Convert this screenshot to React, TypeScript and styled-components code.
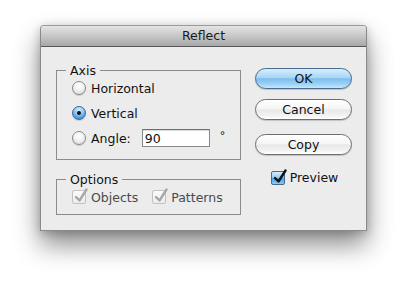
import React from "react";
import styled, { createGlobalStyle, css } from "styled-components";

const Global = createGlobalStyle`
  html, body { margin: 0; padding: 0; background: #ffffff; }
  body { font-family: "DejaVu Sans", "Lucida Grande", sans-serif; font-size: 12.5px; color: #111; }
  * { box-sizing: border-box; }
`;

const Page = styled.div`
  width: 406px;
  height: 285px;
  padding: 25px 0 0 40px;
`;

const Window = styled.div`
  width: 327px;
  height: 206px;
  background: #ececec;
  border: 1px solid #8a8a8a;
  border-top-color: #9a9a9a;
  border-radius: 4px 4px 0 0;
  box-shadow: 0 14px 26px rgba(0, 0, 0, 0.45), 0 2px 10px rgba(0, 0, 0, 0.2);
  display: flex;
  flex-direction: column;
`;

const TitleBar = styled.div`
  height: 21px;
  flex: none;
  background: linear-gradient(#e4e4e4, #c4c4c4 55%, #a7a7a7);
  border-bottom: 1px solid #555;
  border-radius: 3px 3px 0 0;
  text-align: center;
  line-height: 20px;
  font-size: 12.5px;
  color: #1a1a1a;
`;

const Body = styled.div`
  display: flex;
  align-items: flex-start;
  padding: 16px 14px 0 15px;
`;

const LeftCol = styled.div`
  width: 185px;
  display: flex;
  flex-direction: column;
  gap: 12px;
`;

const Group = styled.fieldset`
  margin: 0;
  padding: 0;
  border: 1px solid #8c8c8c;
  min-width: 0;
`;

const Legend = styled.legend`
  margin-left: 9px;
  padding: 0 4px;
  line-height: 15px;
  font-size: 12.5px;
  color: #111;
`;

const GroupInner = styled.div<{ $pb: number }>`
  display: flex;
  flex-direction: column;
  gap: 5px;
  padding: 0 8px ${(p) => p.$pb}px 15px;
`;

const Row = styled.div`
  height: 20px;
  display: flex;
  align-items: center;
`;

const Radio = styled.span<{ $on?: boolean }>`
  width: 14px;
  height: 14px;
  border-radius: 50%;
  flex: none;
  margin-right: 5px;
  position: relative;
  border: 1px solid #8a8a8a;
  background: radial-gradient(circle at 50% 30%, #ffffff 0%, #f4f4f4 40%, #d6d6d6 100%);
  box-shadow: 0 1px 1px rgba(0, 0, 0, 0.15);
  ${(p) =>
    p.$on &&
    css`
      border-color: #3e6a98;
      background: radial-gradient(circle at 50% 25%, #d8eefc 0%, #8ac5ef 45%, #3b8fdc 80%, #6ab4ee 100%);
      &::after {
        content: "";
        position: absolute;
        left: 4px;
        top: 4px;
        width: 4px;
        height: 4px;
        border-radius: 50%;
        background: #111;
      }
    `}
`;

const Label = styled.span<{ $dim?: boolean }>`
  color: ${(p) => (p.$dim ? "#4a4a4a" : "#111")};
  white-space: nowrap;
`;

const Input = styled.input`
  margin-left: 11px;
  width: 68px;
  height: 18px;
  border: 1px solid #8a8a8a;
  border-top-color: #6f6f6f;
  background: #fff;
  box-shadow: inset 0 1px 1px rgba(0, 0, 0, 0.15);
  font-family: inherit;
  font-size: 12.5px;
  padding: 0 2px;
  color: #111;
  outline: none;
`;

const Degree = styled.span`
  margin-left: 10px;
  margin-top: -6px;
  font-size: 11px;
`;

const CheckRow = styled.label<{ $gap?: number }>`
  display: flex;
  align-items: center;
  margin-right: ${(p) => p.$gap ?? 0}px;
`;

const Box = styled.span<{ $blue?: boolean }>`
  width: 14px;
  height: 14px;
  flex: none;
  margin-right: 5px;
  position: relative;
  border: 1px solid ${(p) => (p.$blue ? "#3f6a96" : "#c2c2c2")};
  border-radius: 2px;
  background: ${(p) =>
    p.$blue
      ? "linear-gradient(#d4ecfc, #8fc7f0 50%, #4f9fe2 55%, #8ccaf5)"
      : "linear-gradient(#fbfbfb, #ececec)"};
  svg {
    position: absolute;
    left: 1px;
    top: -3px;
  }
`;

const RightCol = styled.div`
  margin-left: 14px;
  margin-top: 5px;
  width: 97px;
  display: flex;
  flex-direction: column;
  align-items: stretch;
`;

const Button = styled.button<{ $primary?: boolean; $mb: number }>`
  height: 21px;
  margin-bottom: ${(p) => p.$mb}px;
  border-radius: 11px;
  font-family: inherit;
  font-size: 12.5px;
  color: #111;
  padding: 0;
  border: 1px solid ${(p) => (p.$primary ? "#4a6a90" : "#6e6e6e")};
  background: ${(p) =>
    p.$primary
      ? "linear-gradient(#d6eefd 0%, #a9d6f6 45%, #7cbdee 52%, #9dd2f6 80%, #c6e8fc 100%)"
      : "linear-gradient(#ffffff 0%, #f6f6f6 45%, #e8e8e8 52%, #f2f2f2 80%, #ffffff 100%)"};
  box-shadow: 0 1px 1px rgba(0, 0, 0, 0.18);
`;

const PreviewRow = styled.div`
  display: flex;
  justify-content: center;
  padding-left: 2px;
`;

const Check = ({ color }: { color: string }) => (
  <svg width="14" height="15" viewBox="0 0 14 15">
    <path d="M2 9 L5.5 12.5 L12.5 1.5" fill="none" stroke={color} strokeWidth="2.4" strokeLinecap="round" strokeLinejoin="round" />
  </svg>
);

export default function App() {
  return (
    <>
      <Global />
      <Page>
        <Window>
          <TitleBar>Reflect</TitleBar>
          <Body>
            <LeftCol>
              <Group>
                <Legend>Axis</Legend>
                <GroupInner $pb={11}>
                  <Row>
                    <Radio />
                    <Label>Horizontal</Label>
                  </Row>
                  <Row>
                    <Radio $on />
                    <Label>Vertical</Label>
                  </Row>
                  <Row>
                    <Radio />
                    <Label>Angle:</Label>
                    <Input defaultValue="90" />
                    <Degree>°</Degree>
                  </Row>
                </GroupInner>
              </Group>
              <Group>
                <Legend>Options</Legend>
                <GroupInner $pb={7}>
                  <Row>
                    <CheckRow $gap={14}>
                      <Box>
                        <Check color="#a8a8a8" />
                      </Box>
                      <Label $dim>Objects</Label>
                    </CheckRow>
                    <CheckRow>
                      <Box>
                        <Check color="#a8a8a8" />
                      </Box>
                      <Label $dim>Patterns</Label>
                    </CheckRow>
                  </Row>
                </GroupInner>
              </Group>
            </LeftCol>
            <RightCol>
              <Button $primary $mb={10}>OK</Button>
              <Button $mb={14}>Cancel</Button>
              <Button $mb={15}>Copy</Button>
              <PreviewRow>
                <CheckRow>
                  <Box $blue>
                    <Check color="#111" />
                  </Box>
                  <Label>Preview</Label>
                </CheckRow>
              </PreviewRow>
            </RightCol>
          </Body>
        </Window>
      </Page>
    </>
  );
}
